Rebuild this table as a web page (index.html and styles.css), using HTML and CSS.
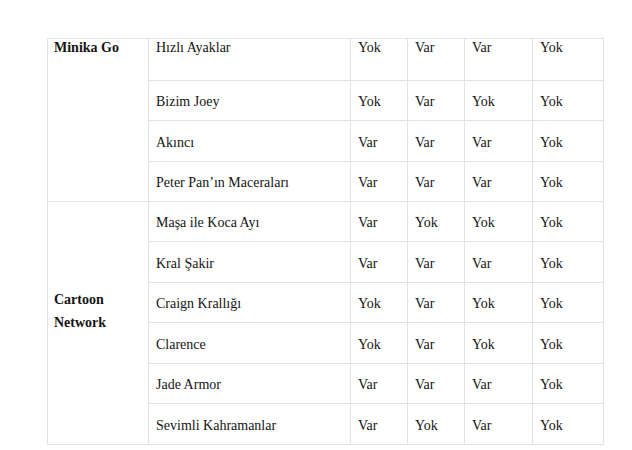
FILE: index.html
```html
<!DOCTYPE html>
<html lang="tr">
<head>
<meta charset="utf-8">
<link rel="stylesheet" href="styles.css">
</head>
<body>
<table class="grid">
  <colgroup>
    <col class="c-channel">
    <col class="c-title">
    <col class="c-a">
    <col class="c-b">
    <col class="c-c">
    <col class="c-d">
  </colgroup>
  <tbody>
    <tr class="r-first">
      <td class="channel top" rowspan="4">Minika Go</td>
      <td>Hızlı Ayaklar</td><td>Yok</td><td>Var</td><td>Var</td><td>Yok</td>
    </tr>
    <tr class="r40"><td>Bizim Joey</td><td>Yok</td><td>Var</td><td>Yok</td><td>Yok</td></tr>
    <tr class="r41"><td>Akıncı</td><td>Var</td><td>Var</td><td>Var</td><td>Yok</td></tr>
    <tr class="r40"><td>Peter Pan’ın Maceraları</td><td>Var</td><td>Var</td><td>Var</td><td>Yok</td></tr>
    <tr class="r40">
      <td class="channel mid" rowspan="6">Cartoon<br>Network</td>
      <td>Maşa ile Koca Ayı</td><td>Var</td><td>Yok</td><td>Yok</td><td>Yok</td>
    </tr>
    <tr class="r41"><td>Kral Şakir</td><td>Var</td><td>Var</td><td>Var</td><td>Yok</td></tr>
    <tr class="r40"><td>Craign Krallığı</td><td>Yok</td><td>Var</td><td>Yok</td><td>Yok</td></tr>
    <tr class="r41"><td>Clarence</td><td>Yok</td><td>Var</td><td>Yok</td><td>Yok</td></tr>
    <tr class="r40"><td>Jade Armor</td><td>Var</td><td>Var</td><td>Var</td><td>Yok</td></tr>
    <tr class="r41"><td>Sevimli Kahramanlar</td><td>Var</td><td>Yok</td><td>Var</td><td>Yok</td></tr>
  </tbody>
</table>
</body>
</html>
```

FILE: styles.css
```css
html, body {
  margin: 0;
  padding: 0;
  background: #ffffff;
}
body {
  padding: 38px 0 0 47px;
  font-family: "Liberation Serif", "Times New Roman", serif;
  font-size: 14px;
  color: #141414;
}
.grid {
  border-collapse: collapse;
  table-layout: fixed;
  width: 556px;
}
.c-channel { width: 101px; }
.c-title { width: 202px; }
.c-a { width: 57px; }
.c-b { width: 57px; }
.c-c { width: 68px; }
.c-d { width: 71px; }
.grid td {
  border: 1px solid #dfe2e6;
  padding: 13px 6px 0 7px;
  vertical-align: top;
  line-height: 16px;
  white-space: nowrap;
  box-sizing: border-box;
}
.r-first td { height: 42px; padding-top: 1px; }
.r40 td { height: 40px; }
.r41 td { height: 41px; padding-top: 14px; }
.grid td.channel {
  font-weight: bold;
  padding-left: 6px;
}
.grid td.channel.top {
  padding-top: 1px;
}
.grid td.channel.mid {
  vertical-align: middle;
  padding-top: 0;
  padding-bottom: 24px;
  line-height: 23px;
  white-space: normal;
}
```
